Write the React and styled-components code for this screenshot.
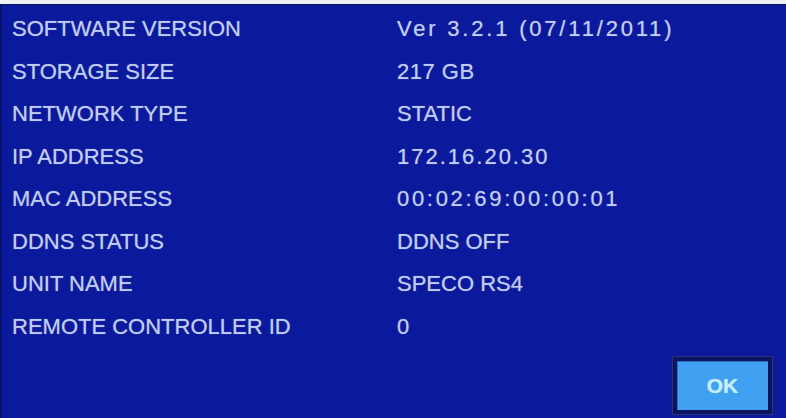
import React from "react";
import styled, { createGlobalStyle } from "styled-components";

const Global = createGlobalStyle`
  html, body { margin: 0; padding: 0; background: #eef0f6; }
  #root { width: 786px; height: 418px; overflow: hidden; }
`;

const Panel = styled.div`
  box-sizing: border-box;
  margin-top: 4px;
  height: 414px;
  width: 786px;
  background: #0b1a9c;
  border-left: 2px solid #0a1266;
  border-top: 1px solid #0a1266;
  padding: 3px 0 4px 10px;
  display: flex;
  flex-direction: column;
  font-family: "Liberation Sans", Arial, sans-serif;
`;

const InfoGrid = styled.div`
  display: grid;
  grid-template-columns: 385px 1fr;
  grid-auto-rows: 42.5px;
  align-items: center;
`;

const Label = styled.div`
  font-size: 22px;
  color: #c2cdf3;
  text-shadow: 0 0 1px rgba(190, 205, 255, 0.6);
  white-space: nowrap;
`;

const Value = styled(Label)`
  letter-spacing: ${(p) => p.$spacing}px;
`;

const Footer = styled.div`
  margin-top: auto;
  display: flex;
  justify-content: flex-end;
  padding-right: 14px;
`;

const OkButton = styled.button`
  box-sizing: border-box;
  width: 99px;
  height: 57px;
  padding: 0;
  background: #3f9ff0;
  border: 4px solid #0a1460;
  box-shadow: 1px 1px 0 0 #9aa3c4, inset 1px 1px 0 #2c6fc0;
  outline: 1px solid #2a3478;
  color: #c6edf8;
  font-family: "Liberation Sans", Arial, sans-serif;
  font-size: 21px;
  font-weight: bold;
  text-shadow: 0 0 1px rgba(210, 245, 255, 0.7);
  cursor: pointer;
`;

const rows = [
  ["SOFTWARE VERSION", "Ver 3.2.1 (07/11/2011)", 2.8],
  ["STORAGE SIZE", "217 GB", 0.5],
  ["NETWORK TYPE", "STATIC", 0],
  ["IP ADDRESS", "172.16.20.30", 2],
  ["MAC ADDRESS", "00:02:69:00:00:01", 2.7],
  ["DDNS STATUS", "DDNS OFF", 0],
  ["UNIT NAME", "SPECO RS4", 0],
  ["REMOTE CONTROLLER ID", "0", 0],
];

export default function App() {
  return (
    <>
      <Global />
      <Panel>
        <InfoGrid>
          {rows.map(([k, v, s]) => (
            <React.Fragment key={k}>
              <Label>{k}</Label>
              <Value $spacing={s}>{v}</Value>
            </React.Fragment>
          ))}
        </InfoGrid>
        <Footer>
          <OkButton>OK</OkButton>
        </Footer>
      </Panel>
    </>
  );
}
